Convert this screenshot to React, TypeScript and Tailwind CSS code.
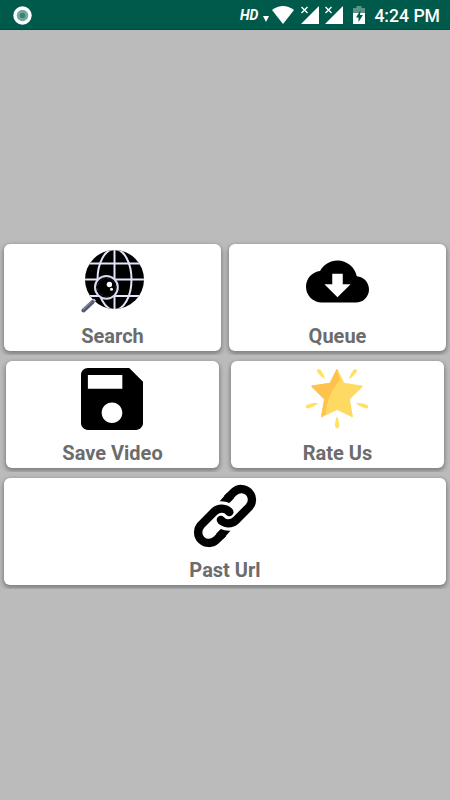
import React from 'react';

interface CardProps {
  label: string;
  className?: string;
  children: React.ReactNode;
}

function Card({ label, className = '', children }: CardProps) {
  return (
    <button
      type="button"
      className={`flex h-[107px] flex-col items-center rounded-[6px] bg-white pt-[5px] shadow-[0_2px_4px_1px_rgba(0,0,0,0.32)] ${className}`}
    >
      <span className="flex h-[64px] items-center justify-center">{children}</span>
      <span className="mt-[11px] text-[20px] leading-[24px] font-bold text-[#6c6c6c]">{label}</span>
    </button>
  );
}

function GlobeSearchIcon() {
  return (
    <svg viewBox="0 0 64 64" className="h-[64px] w-[64px]">
      <clipPath id="globe">
        <circle cx="33.5" cy="30.5" r="29.5" />
      </clipPath>
      <circle cx="33.5" cy="30.5" r="29.5" fill="#000" />
      <g clipPath="url(#globe)" fill="none" stroke="#e3e5fa" strokeWidth="2">
        <path d="M33.5 0v61M4 14.4h60M4 30.6h60M4 47h60" />
        <ellipse cx="33.5" cy="30.5" rx="17" ry="30.5" />
      </g>
      <path d="M14 50.5L9 55.5" stroke="#c5c9df" strokeWidth="3" />
      <path d="M11.5 53L2.5 61.5" stroke="#555970" strokeWidth="4" strokeLinecap="round" />
      <path d="M10.5 52.2L2 60.5" stroke="#858aa5" strokeWidth="1.3" />
      <circle cx="25.4" cy="38.3" r="11.4" fill="#000" stroke="#d8dbf2" strokeWidth="2" />
      <circle cx="25.4" cy="38.3" r="9" fill="none" stroke="#20282f" strokeWidth="0.8" strokeDasharray="4 2" />
      <circle cx="28.4" cy="35.5" r="2.7" fill="#fff" />
      <circle cx="30.5" cy="40.3" r="1.5" fill="#fff" />
    </svg>
  );
}

function CloudIcon() {
  return (
    <svg viewBox="0 0 24 24" className="mt-[1px] h-[63px] w-[63px]">
      <path d="M19.35 10.04C18.67 6.59 15.64 4 12 4 9.11 4 6.6 5.64 5.35 8.04 2.34 8.36 0 10.91 0 14c0 3.31 2.69 6 6 6h13c2.76 0 5-2.24 5-5 0-2.64-2.05-4.78-4.65-4.96zM17 13l-5 5-5-5h3V9h4v4h3z" />
    </svg>
  );
}

function SaveIcon() {
  return (
    <svg viewBox="3 3 18 18" className="mt-[2px] mr-[1px] h-[62px] w-[62px]">
      <path d="M17 3H5c-1.11 0-2 .9-2 2v14c0 1.1.89 2 2 2h14c1.1 0 2-.9 2-2V7l-4-4zm-5 16c-1.66 0-3-1.34-3-3s1.34-3 3-3 3 1.34 3 3-1.34 3-3 3zm3-10H5V5h10v4z" />
    </svg>
  );
}

function StarIcon() {
  return (
    <svg viewBox="46 18 192 192" className="mr-[1px] h-[64px] w-[64px]">
      <path
        d="M142 30L162 71L216 79L178 117L187 169L142 147L97 169L106 117L68 79L122 71Z"
        fill="#ffda63"
        stroke="#ffda63"
        strokeWidth="5"
        strokeLinejoin="round"
      />
      <path
        d="M142 30L122 71L68 79L106 117L97 169L109 163C109 125 124 92 151 60Z"
        fill="#ffc34c"
      />
      <path
        d="M142 30L122 71L68 79L106 117L97 169"
        fill="none"
        stroke="#ffc34c"
        strokeWidth="5"
        strokeLinejoin="round"
        strokeLinecap="round"
      />
      <g fill="#ffe264">
        <path d="M142 168c-4 10-6 20-6 28 0 13 13 13 13 0 0-8-3-18-7-28z" />
        <path d="M85 130c-10-2-22 0-32 4-9 5-4 13 5 11 11-4 20-8 27-15z" />
        <path d="M199 130c10-2 22 0 32 4 9 5 4 13-5 11-11-4-20-8-27-15z" />
        <path d="M106 57c-2-9-6-18-13-27-6-7-14-1-10 6 6 9 13 15 23 21z" />
        <path d="M178 57c2-9 6-18 13-27 6-7 14-1 10 6-6 9-13 15-23 21z" />
      </g>
    </svg>
  );
}

function HalfLink() {
  return (
    <>
      <path
        d="M141 70L162.4 49.4A32 32 0 0 1 207.6 94.6L166.6 136A32 32 0 0 1 122 134"
        fill="none"
        stroke="#000"
        strokeWidth="25"
      />
      <path d="M119 78Q136 77 148 83L162 69L140 54Z" />
      <circle cx="122.5" cy="133.5" r="12.5" />
    </>
  );
}

// the chain is one link drawn twice, the second turned by 180 degrees
function LinkIcon() {
  return (
    <svg viewBox="39 26 192 192" className="mt-[1px] h-[64px] w-[64px]">
      <HalfLink />
      <g transform="rotate(180 135.2 122)">
        <HalfLink />
      </g>
    </svg>
  );
}

function SignalIcon() {
  return (
    <svg viewBox="0 0 20 20" className="h-[20px] w-[20px]">
      <path d="M19 1v18H1z" fill="#fff" />
      <path d="M0 0h10v9H0z" fill="#005a4b" />
      <path d="M1.5 2l6 6M7.5 2l-6 6" stroke="#fff" strokeWidth="1.4" />
    </svg>
  );
}

function StatusBar() {
  return (
    <header className="flex h-[30px] items-center border-b border-[#064b3c] bg-[#005a4b] pr-[10px] pl-[13px] text-white">
      <svg viewBox="0 0 20 20" className="h-[20px] w-[20px]">
        <circle cx="9.5" cy="10.5" r="9.2" fill="#fff" />
        <circle cx="9.5" cy="10.5" r="5.7" fill="#70a89d" />
        <circle cx="9.5" cy="10.5" r="2.7" fill="#3c8175" />
      </svg>
      <span className="mt-[1px] ml-auto text-[14px] leading-none font-bold italic">HD</span>
      <svg viewBox="0 0 6 6" className="mt-[8px] ml-[5px] h-[6px] w-[6px]">
        <path d="M0 0h6L3 6z" fill="#fff" />
      </svg>
      <svg viewBox="0 0 22 18" className="ml-[3px] h-[18px] w-[22px]">
        <path d="M0 4Q11-4 22 4L11 18z" fill="#fff" />
      </svg>
      <div className="mt-[1px] ml-[6px] flex gap-[4px]">
        <SignalIcon />
        <SignalIcon />
      </div>
      <svg viewBox="0 0 12 18" className="mt-[1px] ml-[9px] h-[18px] w-[12px]">
        <path d="M3.5 0h5v2H12v6H0V2h3.5z" fill="#5c9389" />
        <path d="M0 7h12v11H0z" fill="#fff" />
        <path d="M7.5 4L3 11.5h2.5V16L10 9H7z" fill="#005a4b" />
      </svg>
      <span className="mt-[4px] ml-[9px] text-[17.6px] leading-none font-medium">4:24 PM</span>
    </header>
  );
}

export default function App() {
  return (
    <div className="flex h-[800px] w-[450px] flex-col bg-[#bbbbbb] font-['Roboto',sans-serif]">
      <StatusBar />
      <main className="mt-[208px] flex flex-col">
        <div className="flex h-[117px] gap-[8px] overflow-hidden px-[4px] pt-[6px]">
          <Card label="Search" className="flex-1">
            <GlobeSearchIcon />
          </Card>
          <Card label="Queue" className="flex-1">
            <CloudIcon />
          </Card>
        </div>
        <div className="flex h-[117px] gap-[12px] overflow-hidden px-[6px] pt-[6px]">
          <Card label="Save Video" className="flex-1">
            <SaveIcon />
          </Card>
          <Card label="Rate Us" className="flex-1">
            <StarIcon />
          </Card>
        </div>
        <div className="flex h-[117px] overflow-hidden px-[4px] pt-[6px]">
          <Card label="Past Url" className="flex-1">
            <LinkIcon />
          </Card>
        </div>
      </main>
    </div>
  );
}
